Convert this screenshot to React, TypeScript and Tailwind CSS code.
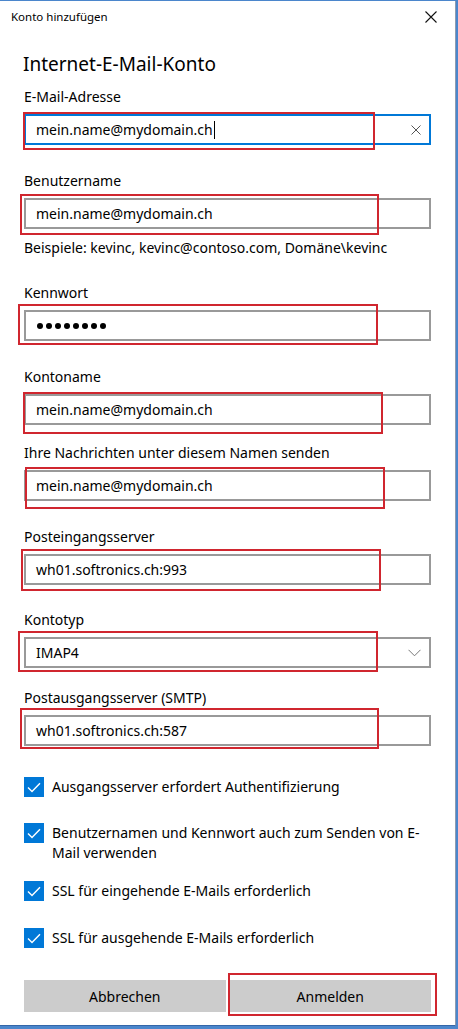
import React from "react";

interface FieldProps {
  label: string;
  labelClass: string;
  redClass: string;
  focused?: boolean;
  children: React.ReactNode;
}

function RedBox({ className }: { className: string }) {
  return <div className={`absolute border-2 border-[#d0262f] pointer-events-none ${className}`} />;
}

function Field({ label, labelClass, redClass, focused, children }: FieldProps) {
  return (
    <>
      <div className={`h-[20px] leading-[20px] ${labelClass}`}>{label}</div>
      <div className="relative mt-[7px]">
        <div
          className={`h-[31px] border-2 flex items-center justify-between pl-[10px] pr-[8px] ${
            focused ? "border-[#0078d7]" : "border-[#999999]"
          }`}
        >
          {children}
        </div>
        <RedBox className={redClass} />
      </div>
    </>
  );
}

function CheckRow({ className, children }: { className: string; children: React.ReactNode }) {
  return (
    <div className={`flex items-start gap-[8px] ${className}`}>
      <div className="w-[20px] h-[20px] shrink-0 bg-[#0078d7] flex items-center justify-center">
        <svg width="14" height="11" viewBox="0 0 14 11">
          <path d="M1 5.5 L5 9.5 L13 1.2" fill="none" stroke="white" strokeWidth="1.4" />
        </svg>
      </div>
      <div className="leading-[20px] whitespace-nowrap">{children}</div>
    </div>
  );
}

export default function App() {
  return (
    <div className="w-[458px] h-[1029px] bg-[#4b86cc] pt-px pr-[2px] pb-[3px] font-['Noto_Sans',sans-serif] text-black text-[14px]">
      <div className="h-full bg-white border-r border-r-[#8e9bb0] border-b border-b-[#3466a8] flex flex-col">
        <div className="h-[31px] shrink-0 flex items-center justify-between pl-[11px] pr-[18px]">
          <span className="text-[11.5px]">Konto hinzufügen</span>
          <svg width="12" height="12" viewBox="0 0 12 12">
            <path d="M0.5 0.5 L11.5 11.5 M11.5 0.5 L0.5 11.5" stroke="#111" strokeWidth="1.1" />
          </svg>
        </div>

        <div className="flex flex-col px-[24px]">
          <div className="mt-[18px] text-[19px] leading-[28px] ml-[-1px]">Internet-E-Mail-Konto</div>

          <Field label="E-Mail-Adresse" labelClass="mt-[9px]" redClass="left-[-1px] top-[-2px] w-[352px] h-[38px]" focused>
            <div className="flex items-center">
              <span>mein.name@mydomain.ch</span>
              <span className="w-px h-[18px] bg-black ml-px" />
            </div>
            <svg width="10" height="10" viewBox="0 0 10 10">
              <path d="M0.5 0.5 L9.5 9.5 M9.5 0.5 L0.5 9.5" stroke="#555" strokeWidth="1" />
            </svg>
          </Field>

          <Field label="Benutzername" labelClass="mt-[26px]" redClass="left-[-4px] top-[-4px] w-[359px] h-[41px]">
            <span>mein.name@mydomain.ch</span>
          </Field>

          <div className="mt-[9px] h-[20px] leading-[20px]">Beispiele: kevinc, kevinc@contoso.com, Domäne\kevinc</div>

          <Field label="Kennwort" labelClass="mt-[25px]" redClass="left-[-6px] top-[-6px] w-[360px] h-[41px]">
            <div className="flex gap-[3px] ml-px">
              {Array.from({ length: 8 }).map((_, i) => (
                <span key={i} className="w-[6px] h-[6px] rounded-full bg-black" />
              ))}
            </div>
          </Field>

          <Field label="Kontoname" labelClass="mt-[26px]" redClass="left-[-1px] top-[-2px] w-[360px] h-[42px]">
            <span>mein.name@mydomain.ch</span>
          </Field>

          <Field
            label="Ihre Nachrichten unter diesem Namen senden"
            labelClass="mt-[18px]"
            redClass="left-[1px] top-[-3px] w-[360px] h-[42px]"
          >
            <span>mein.name@mydomain.ch</span>
          </Field>

          <Field label="Posteingangsserver" labelClass="mt-[26px]" redClass="left-[-3px] top-[-5px] w-[360px] h-[42px]">
            <span>wh01.softronics.ch:993</span>
          </Field>

          <Field label="Kontotyp" labelClass="mt-[25px]" redClass="left-[-6px] top-[-6px] w-[360px] h-[41px]">
            <span>IMAP4</span>
            <svg width="13" height="8" viewBox="0 0 13 8">
              <path d="M0.5 0.8 L6.5 6.8 L12.5 0.8" fill="none" stroke="#777" strokeWidth="1" />
            </svg>
          </Field>

          <Field label="Postausgangsserver (SMTP)" labelClass="mt-[20px]" redClass="left-[-4px] top-[-7px] w-[359px] h-[41px]">
            <span>wh01.softronics.ch:587</span>
          </Field>

          <CheckRow className="mt-[31px]">Ausgangsserver erfordert Authentifizierung</CheckRow>
          <CheckRow className="mt-[26px]">
            Benutzernamen und Kennwort auch zum Senden von E-
            <br />
            Mail verwenden
          </CheckRow>
          <CheckRow className="mt-[18px]">SSL für eingehende E-Mails erforderlich</CheckRow>
          <CheckRow className="mt-[27px]">SSL für ausgehende E-Mails erforderlich</CheckRow>

          <div className="mt-[32px] flex gap-[4px]">
            <div className="flex-1 h-[32px] bg-[#cccccc] flex items-center justify-center">Abbrechen</div>
            <div className="flex-1 relative">
              <div className="h-[32px] bg-[#cccccc] flex items-center justify-center">Anmelden</div>
              <RedBox className="left-[-2px] top-[-7px] w-[209px] h-[43px]" />
            </div>
          </div>
        </div>
      </div>
    </div>
  );
}
